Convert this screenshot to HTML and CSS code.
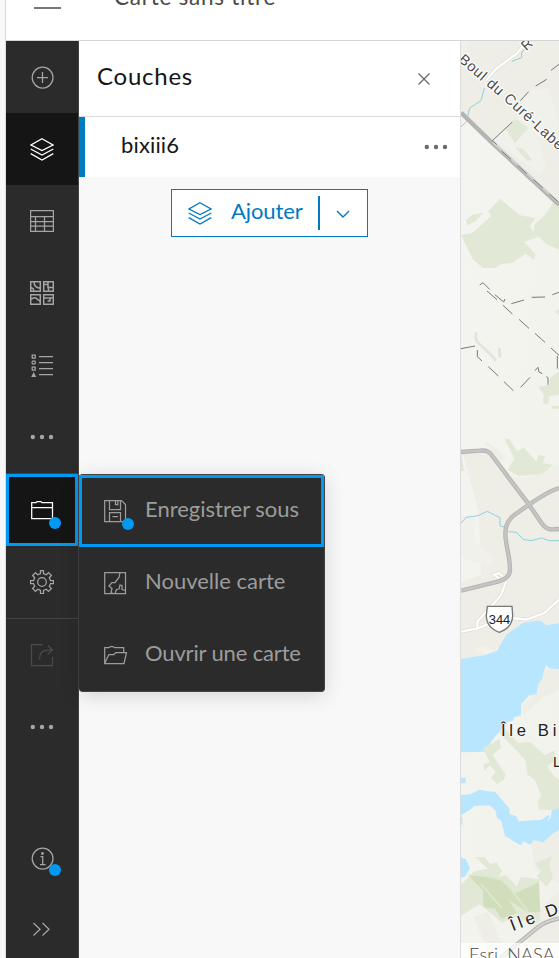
FILE: index.html
```html
<!DOCTYPE html>
<html lang="fr">
<head>
<meta charset="utf-8">
<title>Carte sans titre</title>
<link rel="stylesheet" href="styles.css">
</head>
<body>
<svg class="defs" aria-hidden="true">
  <symbol id="layers" viewBox="0 0 24 24"><path d="M12 1.800 23 8l-11 5.600L1 8zM.7 12 12 18l11.300-6M.7 16.600 12 23l11.300-6.400"/></symbol>
  <symbol id="dots" viewBox="0 0 24 24"><g class="solid"><circle cx="2.800" cy="12" r="2.200"/><circle cx="12" cy="12" r="2.200"/><circle cx="21" cy="12" r="2.200"/></g></symbol>
</svg>
<div class="app">
  <header class="topbar">
    <span class="menu-line"></span>
    <span class="map-title">Carte sans titre</span>
  </header>
  <div class="workspace">
    <nav class="rail">
      <div class="item"><svg class="icon" viewBox="0 0 24 24"><circle cx="12.600" cy="12.600" r="10.400"/><path d="M12.500 7v11M7 12.500h11"/></svg></div>
      <div class="item active"><svg class="icon"><use href="#layers"/></svg></div>
      <div class="item"><svg class="icon" viewBox="0 0 24 24"><path d="M.6 1.600h22.800v20.800H.6zM.5 7.500h23M.5 12.500h23M.5 17h23M5.500 7.500v15M14.500 7.500v15"/></svg></div>
      <div class="item"><svg class="icon bold" viewBox="0 0 24 24"><path d="M.7.700h9.600v9.600H.7zM13.700.700h9.600v9.600h-9.600zM.7 13.700h9.600v9.600H.7zM13.700 13.700h9.600v9.600h-9.600zM4 .7c0 3.500 2.500 6 6 6.500M.7 6.500l2.300 1 1 2.500M13.500 3.500h4.500v3h5M18 .7v2M18.500 10v-3.500M.7 18.500c3-2.500 5-2.500 7 0l2.500 2M13.500 17h10M20 17v3h-2.500"/></svg></div>
      <div class="item"><svg class="icon" viewBox="0 0 24 24"><path d="M2.200 2h3v3h-3zM2.200 14h3v3h-3zM9 3.500h14M9 9.500h14M9 15.500h14M9 21.500h14"/><circle cx="3.700" cy="9.500" r="1.700"/><path class="solid" d="m3.700 19 2.500 5h-5z"/></svg></div>
      <div class="item"><svg class="icon"><use href="#dots"/></svg></div>
      <div class="item active focused ruled"><svg class="icon" viewBox="0 0 24 24"><path d="M1.700 20.500V4.500H6l1.200-1h3.600l1.200 1h10.500v16zM1.700 9.500h20.800"/></svg><i class="badge"></i></div>
      <div class="item"><svg class="icon" viewBox="0 0 24 24"><path d="M10.500.5h3v3l2.800 1.200 2.200-2.100 2.900 2.900-2.100 2.200 1.200 2.800h3v3h-3l-1.200 2.800 2.100 2.200-2.900 2.900-2.200-2.100-2.800 1.200v3h-3v-3l-2.800-1.200-2.200 2.100-2.900-2.900 2.100-2.200L3.500 13.500h-3v-3h3l1.200-2.800-2.100-2.200 2.900-2.900 2.200 2.100 2.800-1.200z"/><circle cx="12" cy="12" r="4.300"/></svg></div>
      <div class="item disabled ruled"><svg class="icon" viewBox="0 0 24 24"><path d="M13 1.500H1.500v21h21V14M9.500 16.500c0-6 3-9.500 8-9.500h4.500M18 2.500 22.500 7 18 11"/></svg></div>
      <div class="item"><svg class="icon"><use href="#dots"/></svg></div>
      <div class="rail-bottom">
        <div class="item"><svg class="icon" viewBox="0 0 24 24"><circle cx="12.600" cy="12.600" r="10.400"/><path d="M10.500 10.500h2.200v8M10 18.500h5.500"/><circle class="solid" cx="12.500" cy="7.500" r="1.400"/></svg><i class="badge low"></i></div>
        <div class="item"><svg class="icon" viewBox="0 0 24 24"><path d="m3.500 5 6.500 6.200L3.500 17.500M12.500 5l6.500 6.200-6.500 6.300"/></svg></div>
      </div>
    </nav>
    <section class="panel">
      <div class="panel-head"><h1>Couches</h1><svg class="close" viewBox="0 0 14 14"><path d="m1.500 1.500 11 11M12.500 1.500l-11 11"/></svg></div>
      <div class="layer"><span>bixiii6</span><svg class="icon"><use href="#dots"/></svg></div>
      <div class="add">
        <svg class="icon"><use href="#layers"/></svg><span class="add-label">Ajouter</span><span class="divider"></span><svg class="chevron" viewBox="0 0 14 8"><path d="m1 1 6 6 6-6"/></svg>
      </div>
    </section>
    <div class="map">
      <svg viewBox="461 41 98 917" width="98" height="917">
        <defs><linearGradient id="ground" x1="0" y1="0" x2="1" y2="1"><stop offset="0" stop-color="#f4f5f0"/><stop offset="1" stop-color="#f2f2ec"/></linearGradient></defs>
        <rect x="461" y="41" width="98" height="917" fill="url(#ground)"/>
        <g transform="translate(455 36) scale(.33333)">
          <path class="urban" d="M18 15h294v490L110 312 18 220z"/>
          <path fill="#f3f4ee" d="M18 15h30L20 55zM115 310l75-65 30-80 60-10 20 60 12 60-60 30 20 90-20 20z" opacity=".6"/>
          <path class="green" d="m152 279 30-31 38 28-40 46zM180 332l25 8 27 32-15 3zM18 598l35-8 55-50-8-15 35-37 60 50 45 8-15 25 10 18 3-22 35-34 25-40 29 14v142l-20-10-30-12-25-25-45 15 35 38-5 17-25-19-40 28-32 2-18 12-38 1-31-26zM32 552l20-16 33-6-22 25-25 13z"/>
          <path class="stream" d="m18 272 16-14 10-42 34-22 10-38M170 76l30-11V50l15-18"/>
          <path class="casing" d="m92 134 33-37 60-44 22-27"/><path class="road" d="m92 134 33-37 60-44 22-27"/>
          <path class="highway" d="m18 230 95 92 199 184"/><path class="highway-core" d="m113 318 199 183"/>
          <path class="rail-dash" d="m140 345 172 155"/>
          <path class="boundary" d="m126 326-14-12 60-56M196 194l25-27M242 150l33-20M288 103l24-18"/>
          <path id="curve" fill="none" d="m8 74 152 131 180 166"/>
          <text class="street" font-size="44" textLength="405"><textPath href="#curve">Boul du Curé-Labe</textPath></text>
          <text class="street" font-size="42" transform="translate(214 46) rotate(-42)">R</text>
        </g>
        <g transform="translate(455 270) scale(.33333)">
          <path class="boundary" d="m74 45 10-7 20 20M96 63l30 26M120 74l26 22 4-9M144 106l28 26M192 148l30 27M240 190l30 27M288 234l24 22M169 101l38-11M230 82l40-1M292 74l20-7M18 236l42-8M67 240v20l14 13M100 290l30 28M147 335l28 27M197 352l28-30M240 302l9-10 3 14 10 5M274 320l5 3v32M307 258v38M311 322v36"/>
          <path class="relief" d="M63 190c-8 25 18 37 30 50s25 22 28 30M133 237l2 22"/>
          <path class="green" d="m250 352 30-8 5-20 27-18v68l-28 3-5 27-15-5 2-26zM290 408h22v8h-22zM300 126l12-8v18zM148 505l16 3 22 35 21-10 38 42 5-20 20 3-6 22 29 4-29 28-72 6-34-18 20-35zM18 548l10 54-10 2z"/>
          <path class="urban" d="m23 550 80-8 110 165 99-60v73H70zM88 515c20 0 50 35 62 47l-12 16z"/>
          <path class="urban" d="m150 625 80-5 82-35v70l-95 50z" opacity=".7"/>
        </g>
        <g transform="translate(455 500) scale(.33333)">
          <path class="urban" d="M70 0h242v420l-65 0-110 20-60 30-59 5V245l60-20z"/>
          <path fill="#f0f1ea" d="M18 45 60 55l-3 70 58 45-6 27-60-12-31-15z"/><path fill="#f2f2eb" d="m57 450 25-14 30 12-10 16z"/>
          <path class="urban" d="M270 510 312 500v70l-52 25-55 50v-30l30-30z"/>
          <path class="water" d="m18 476 70-10 38-14 28-48 50-35 35-6 18-1 17 14 38-6v138l-28-3-12-10-10 40-13 20-5 27-23 5-22 26-1 33-20 6-5 10-18 5-15 20-30 35-16 33-76 2z"/>
          <path class="stream" d="m18 70 15-18 36-5 28-13 38 19v25l12 3M160 95l24 2 21 21 25 4 30-8 22 8h30"/>
          <path class="casing" d="m18 395 50-10 30-12M67 385v-20l70-78 16-40M132 236l-14-12 14-5 11 10M170 354l45 5 53-20 44-40"/>
          <path class="road" d="m18 395 50-10 30-12M67 385v-20l70-78 16-40M132 236l-14-12 14-5 11 10M170 354l45 5 53-20 44-40"/>
          <g class="arterial-case"><path id="main-road" d="m18 272 110-27c25-7 37-18 37-36 0-42-14-72-14-110 0-24 8-39 28-55l45-31C252-7 280-25 312-36M222 14 115-128c-13-20-21-22-42-20l-55 4M222 14l38 56c9 13 20 22 52 17"/></g>
          <use class="arterial" href="#main-road"/>
          <path class="shield" d="M97 319h74l2 27c0 25-14 42-40 51-25-9-39-26-39-51z"/>
          <text class="number" x="101" y="373" font-size="39" textLength="65">344</text>
        </g>
        <g transform="translate(455 720) scale(.33333)">
          <path class="urban" d="m225 355 87-45v180l-70-40zM55 590l45-15 40 94H90zM235 580l77-65v154H220z"/>
          <path class="green" d="m130 35 20-8 40 42 36-3 43 40 30-15v30l-22 18 20 30 15 10v90h-60l-3-27 10-15-20-48-22-16-5-42zM84 84l28-14 22-14 4 28-26 20 40 60-6 15-20 13-18-18 15-20-20-18-15 17-2-21 18-5zM60 410l30 2 15 20 20-5 16 25-10 20 20-8 35 35 10-28 60 7-10 27 10 100-26 7-46-22-42 18-68-55-56 34V494l40-40 40-8zM240 430l52-22-10 30 12 35-20 27-30-32 15-15z"/>
          <path class="deep-green" d="m40 465 90 10 50 45 72-33 4 90-40-2-55-35 25 38-46 18-20-30-34-5-3-50z"/>
          <path class="path" d="m40 465c40 2 80 4 110 20l70 90M78 492l62 72"/>
          <path class="water" d="M18 173h14v17H18zM18 225l27-2 30-14 18 4 27 2 43 50 1 18 20 6 8 15 68-5 20-14 5 4-10 16 12-12 3-22 22-6v65l-20 12-28 25-28-7-10 14-20-10-10 12-46-28-12-47-12-7-5-23-18-15-45 2-13 12-37 22zM18 290h4v24h-4zM18 412l15 6 12 27-15 25-12 3z"/>
          <path class="highway" d="m135 715 116-95c20-15 40-20 61-25"/><path class="highway-core" d="m135 715 116-95c20-15 40-20 61-25"/>
          <text class="place" x="138" y="47" font-size="50" textLength="166">Île Bi</text>
          <text class="place" x="294" y="141" font-size="43">L</text>
          <text class="place" font-size="51" textLength="150" transform="translate(173 634) rotate(-21)">Île D</text>
        </g>
      </svg>
      <div class="credit">Esri, NASA</div>
    </div>
  </div>
  <div class="popup">
    <div class="action selected"><svg class="icon" viewBox="0 0 24 24"><path d="M1.700 1.500h16.800l4 4v17H1.700zM6.500 1.500v9h11v-9M12.500 1.500v4h2.300v-4M6.500 22.500v-9h11v9M9.500 17.500h5.500"/></svg><span>Enregistrer sous</span><i class="badge"></i></div>
    <div class="action"><svg class="icon" viewBox="0 0 24 24"><path d="M1.700 1.500h20.800v21H1.700zM17 1.500l-1 5-4 5H9l-3 3.500 3 2.500-1 4 2 1M12 22.500l1.500-4 2.500-.5 1-4 2 .5v4l3.500 1"/></svg><span>Nouvelle carte</span></div>
    <div class="action"><svg class="icon" viewBox="0 0 24 24"><path d="M1.700 20.500V4.500h4l2-1h2l2 1h9v4.800M1.700 20.500l4.100-9h5l2-2h10.700l-2.500 11z"/></svg><span class="tight">Ouvrir une carte</span></div>
  </div>
</div>
</body>
</html>
```
FILE: styles.css
```css
* { box-sizing: border-box; }
html, body { margin: 0; height: 100%; overflow: hidden; }
body { background: #f8f8f8; font-family: Lato, "Open Sans", sans-serif; }
.defs { position: absolute; width: 0; height: 0; }
.app { position: relative; height: 958px; margin-left: 5px; border-left: 1px solid #dcdcdc; display: flex; flex-direction: column; overflow: hidden; }
.topbar { height: 41px; flex: none; background: #fff; border-bottom: 1px solid #d5d5d5; display: flex; align-items: flex-start; }
.menu-line { width: 27px; height: 2px; margin: 7px 0 0 28px; background: #777; flex: none; }
.map-title { margin: -17px 0 0 53px; font-size: 22.5px; line-height: 28px; color: #4a4a4a; letter-spacing: .75px; white-space: nowrap; }
.workspace { flex: 1; min-height: 0; display: flex; }
svg { fill: none; stroke: currentColor; stroke-width: 1.25; flex: none; }
.icon { width: 24px; height: 24px; }
.bold { stroke-width: 1.5; }
.solid { fill: currentColor; stroke: none; }
.rail { width: 73px; flex: none; background: #2b2b2b; border-right: 1px solid #434343; color: #a5a5a5; display: flex; flex-direction: column; }
.item { height: 72px; flex: none; display: flex; align-items: center; justify-content: center; position: relative; }
.active { background: #151515; color: #fff; }
.ruled { height: 73px; border-top: 1px solid #434343; }
.focused::after, .selected::after { content: ""; position: absolute; inset: 0; border: 3px solid #009af2; }
.disabled { color: #4b4b4b; }
.badge { position: absolute; left: 43px; top: 43px; width: 12px; height: 12px; border-radius: 50%; background: #009af2; }
.badge.low { top: 42px; }
.rail-bottom { margin-top: 59px; }
.panel { width: 382px; flex: none; border-right: 1px solid #dcdcdc; background: #f8f8f8; }
.panel-head { height: 76px; background: #fff; border-bottom: 1px solid #dcdcdc; padding: 0 29px 4px 18px; display: flex; align-items: center; justify-content: space-between; }
h1 { margin: -2px 0 0; font-size: 24px; font-weight: 400; line-height: 30px; letter-spacing: .75px; color: #151515; }
.close { width: 14px; height: 14px; margin-top: 4px; color: #6a6a6a; stroke-width: 1.3; }
.layer { height: 60px; background: #fff; border-left: 6px solid #007ac2; padding: 0 12px 0 36px; display: flex; align-items: center; justify-content: space-between; color: #6a6a6a; }
.layer span { font-size: 22px; line-height: 26px; letter-spacing: .15px; color: #151515; margin-top: -4px; }
.add { width: 197px; height: 48px; margin: 12px 0 0 92px; border: 1px solid #007ac2; background: #fff; color: #007ac2; display: flex; align-items: center; padding-left: 16px; }
.add-label { width: 88px; margin: -4px 0 0 19px; padding-right: 1px; font-size: 22px; line-height: 26px; letter-spacing: -.1px; flex: 0 0 87px; }
.divider { width: 2px; height: 34px; background: #007ac2; flex: none; }
.chevron { width: 14px; height: 8px; margin: 1px 0 0 16px; stroke-width: 1.4; }
.popup { position: absolute; z-index: 2; left: 73px; top: 474px; width: 246px; height: 218px; border: 1px solid #434343; border-left: 0; border-radius: 4px; background: #2b2b2b; color: #9c9c9c; box-shadow: 0 4px 20px rgba(0,0,0,.14); }
.action { height: 72px; padding-left: 24px; display: flex; align-items: center; position: relative; }
.action span { margin: -4px 0 0 18px; font-size: 22px; line-height: 26px; letter-spacing: 0; white-space: nowrap; }
.action .tight { letter-spacing: -.15px; }
.map { flex: 1; min-width: 0; position: relative; overflow: hidden; }
.map svg { display: block; stroke: none; }
.urban { fill: #eeede6; }
.green { fill: #e1e8d5; }
.deep-green { fill: #d0debc; }
.water { fill: #b9e6ff; }
.stream { stroke: #8fd0df; stroke-width: 3; }
.casing { stroke: #dedbd3; stroke-width: 11; }
.road { stroke: #fff; stroke-width: 7; }
.highway { stroke: #b4b4b4; stroke-width: 13; }
.highway-core { stroke: #d2d2d0; stroke-width: 6; }
.rail-dash { stroke: #777; stroke-width: 3; stroke-dasharray: 38 26; }
.boundary { stroke: #777; stroke-width: 3; }
.relief { stroke: #e4e2dd; stroke-width: 8; stroke-linecap: round; }
.arterial-case { stroke: #b1b1b1; stroke-width: 13; }
.arterial { stroke: #c4c4c2; stroke-width: 8; }
.path { stroke: #dfe8ce; stroke-width: 5; }
.street { font-family: "Liberation Sans", sans-serif; fill: #4d4d4d; stroke: #fff; stroke-width: 7; paint-order: stroke; stroke-linejoin: round; }
.number, .place { font-family: "Liberation Sans", sans-serif; fill: #222; }
.place { stroke: #f6f6f2; stroke-width: 5; paint-order: stroke; }
.shield { fill: #fff; stroke: #777; stroke-width: 4; }
.credit { position: absolute; left: 0; right: 0; bottom: 0; height: 15px; padding-left: 8px; background: rgba(255,255,255,.75); color: #4a4a4a; font-size: 18px; font-weight: 300; line-height: 22px; letter-spacing: .2px; white-space: nowrap; overflow: hidden; }
```
